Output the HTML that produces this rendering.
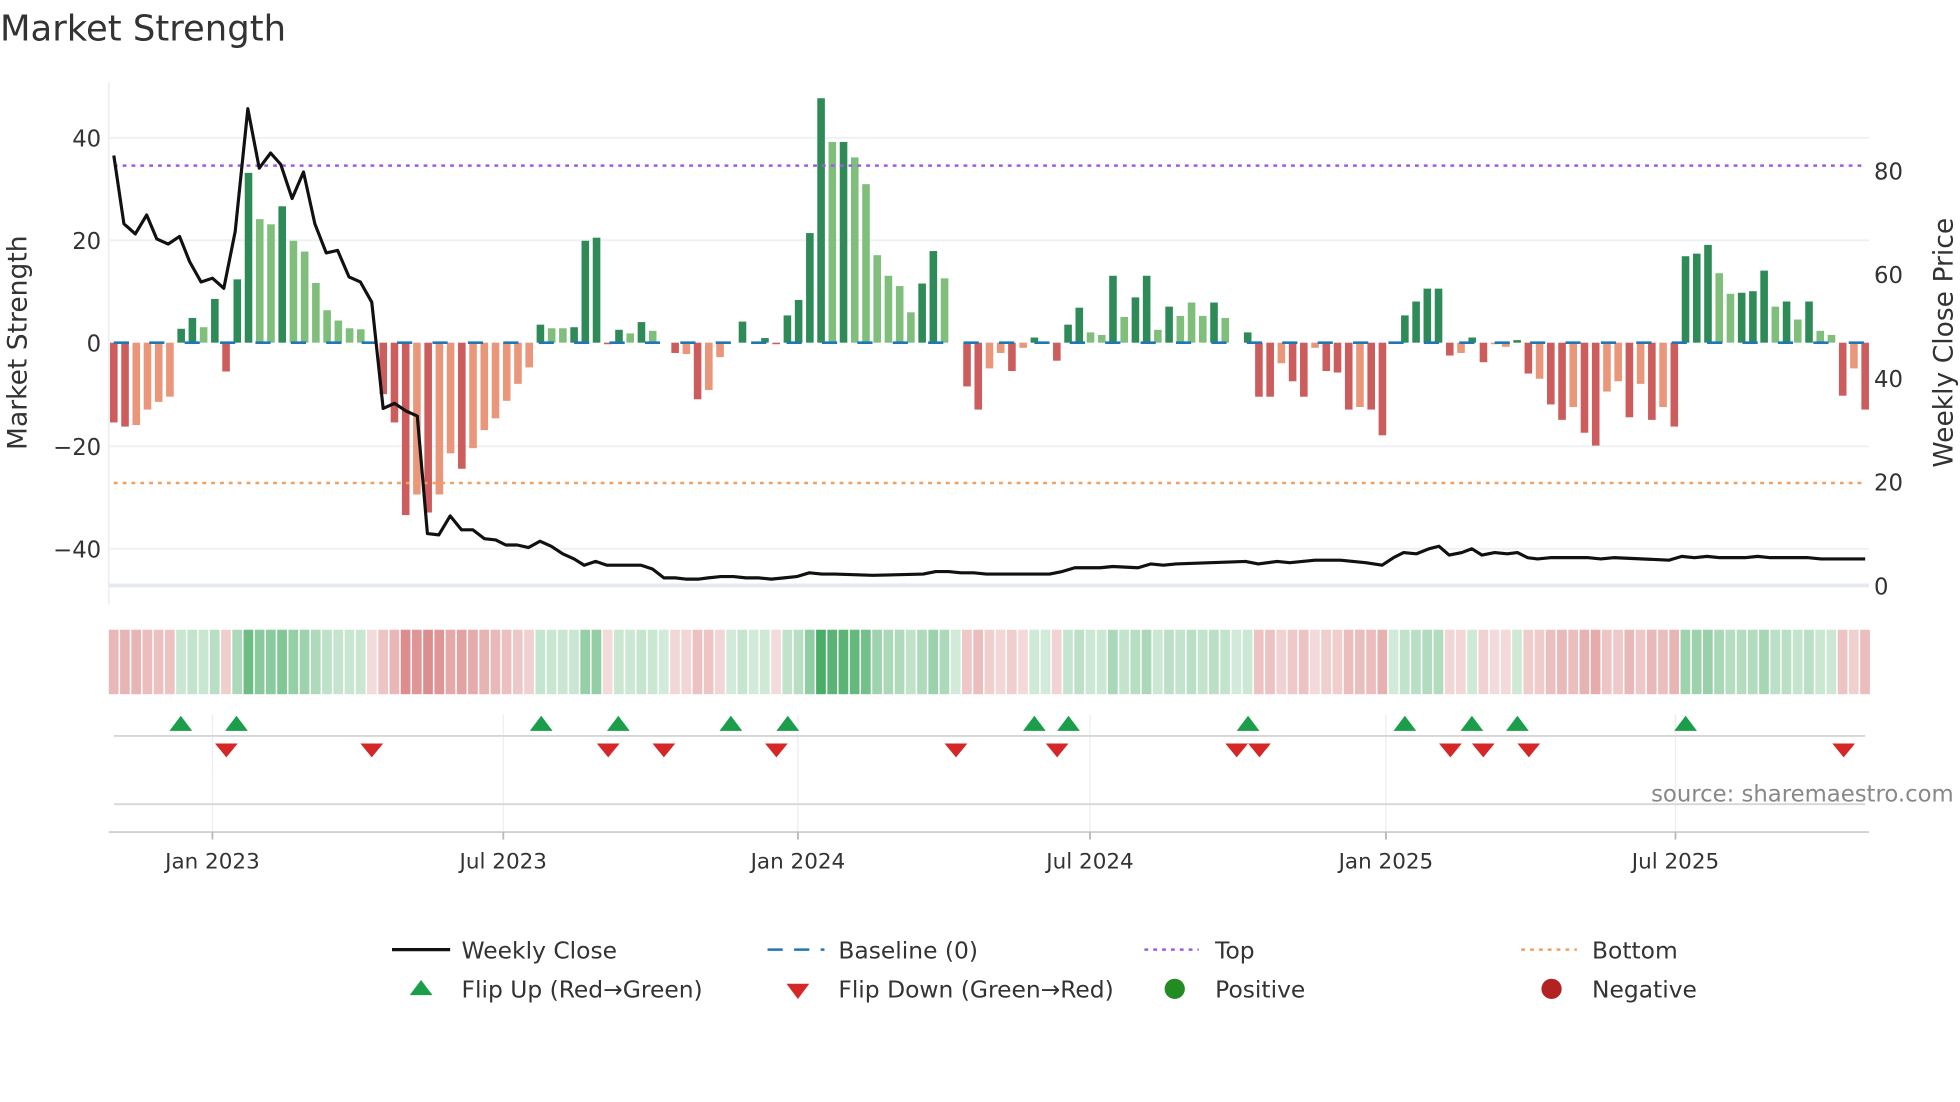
<!DOCTYPE html>
<html><head><meta charset="utf-8"><style>
html,body{margin:0;padding:0;background:#fff;}
svg{display:block;font-family:"DejaVu Sans","Liberation Sans",sans-serif;}
</style></head><body>
<svg id="s" width="1960" height="1102" viewBox="0 0 1550 871.5" preserveAspectRatio="none" xmlns="http://www.w3.org/2000/svg">
<text x="0" y="32" font-size="28" fill="#333">Market Strength</text>
<g stroke="#eef0f4" stroke-width="1.5">
<line x1="86" y1="109" x2="1478" y2="109"/><line x1="86" y1="190" x2="1478" y2="190"/>
<line x1="86" y1="353" x2="1478" y2="353"/><line x1="86" y1="434" x2="1478" y2="434"/>
<line x1="86" y1="65" x2="86" y2="478"/>
</g>
<line x1="86" y1="463" x2="1478" y2="463" stroke="#e6e9ef" stroke-width="3"/>
<g font-size="18" fill="#333" text-anchor="end">
<text x="80" y="116">40</text><text x="80" y="197">20</text><text x="80" y="278">0</text>
<text x="80" y="360">−20</text><text x="80" y="441">−40</text>
</g>
<g font-size="18" fill="#333">
<text x="1482" y="142">80</text><text x="1482" y="224">60</text><text x="1482" y="306">40</text>
<text x="1482" y="388">20</text><text x="1482" y="470">0</text>
</g>
<text transform="translate(21,271) rotate(-90)" font-size="21" fill="#333" text-anchor="middle">Market Strength</text>
<text transform="translate(1544,271) rotate(-90)" font-size="21" fill="#333" text-anchor="middle">Weekly Close Price</text>
<g id="bars"></g>
<line x1="90" y1="271" x2="1475" y2="271" stroke="#1f77b4" stroke-width="2" stroke-dasharray="12,16"/>
<line x1="90" y1="131" x2="1475" y2="131" stroke="#9b5de5" stroke-width="2" stroke-dasharray="3,4"/>
<line x1="90" y1="382" x2="1475" y2="382" stroke="#f0a060" stroke-width="2" stroke-dasharray="3,4"/>
<polyline fill="none" stroke="#111" stroke-width="2.5" stroke-linejoin="round" points="90,123 98,177 107,185 116,170 124,189 133,193 142,187 150,207 159,223 168,220 177,228 186,183 196,86 205,133 214,121 222,130 231,157 240,136 249,177 258,200 267,198 276,219 285,223 294,239 303,323 312,319 321,325 330,329 338,422 347,423 356,408 365,419 374,419 383,426 392,427 400,431 409,431 418,433 427,428 436,432 445,438 454,442 462,447 471,444 480,447 489,447 498,447 507,447 516,450 525,457 534,457 543,458 552,458 560,457 570,456 580,456 590,457 600,457 610,458 620,457 630,456 640,453 650,454 660,454 690,455 730,454 740,452 750,452 760,453 770,453 780,454 830,454 840,452 850,449 870,449 880,448 900,449 910,446 920,447 930,446 985,444 995,446 1010,444 1020,445 1040,443 1060,443 1080,445 1093,447 1102,441 1110,437 1120,438 1130,434 1138,432 1146,439 1156,437 1164,434 1172,439 1182,437 1192,438 1200,437 1208,441 1216,442 1226,441 1256,441 1266,442 1276,441 1320,443 1330,440 1340,441 1350,440 1360,441 1370,441 1380,441 1390,440 1400,441 1430,441 1440,442 1475,442"/>
<g id="heat"></g>
<g stroke="#eceef2" stroke-width="1">
<line x1="168" y1="565" x2="168" y2="658"/><line x1="398" y1="565" x2="398" y2="658"/>
<line x1="631" y1="565" x2="631" y2="658"/><line x1="862" y1="565" x2="862" y2="658"/>
<line x1="1096" y1="565" x2="1096" y2="658"/><line x1="1325" y1="565" x2="1325" y2="658"/>
</g>
<line x1="90" y1="582" x2="1475" y2="582" stroke="#d6d6d6" stroke-width="1.5"/>
<line x1="90" y1="636" x2="1475" y2="636" stroke="#d6d6d6" stroke-width="1.5"/>
<line x1="86" y1="658" x2="1478" y2="658" stroke="#d0d0d0" stroke-width="1.5"/>
<g stroke="#bbb" stroke-width="1.5">
<line x1="168" y1="658" x2="168" y2="664"/><line x1="398" y1="658" x2="398" y2="664"/>
<line x1="631" y1="658" x2="631" y2="664"/><line x1="862" y1="658" x2="862" y2="664"/>
<line x1="1096" y1="658" x2="1096" y2="664"/><line x1="1325" y1="658" x2="1325" y2="664"/>
</g>
<g id="flips"></g>
<text x="1545" y="634" font-size="18" fill="#888" text-anchor="end">source: sharemaestro.com</text>
<g font-size="17" fill="#333" text-anchor="middle">
<text x="168" y="687">Jan 2023</text><text x="398" y="687">Jul 2023</text><text x="631" y="687">Jan 2024</text>
<text x="862" y="687">Jul 2024</text><text x="1096" y="687">Jan 2025</text><text x="1325" y="687">Jul 2025</text>
</g>
<g font-size="18.5" fill="#333">
<line x1="310" y1="751" x2="356" y2="751" stroke="#111" stroke-width="2.5"/><text x="365" y="758">Weekly Close</text>
<line x1="607" y1="751" x2="652" y2="751" stroke="#1f77b4" stroke-width="2" stroke-dasharray="12,9"/><text x="663" y="758">Baseline (0)</text>
<line x1="905" y1="751" x2="948" y2="751" stroke="#9b5de5" stroke-width="2" stroke-dasharray="3,4"/><text x="961" y="758">Top</text>
<line x1="1203" y1="751" x2="1247" y2="751" stroke="#f0a060" stroke-width="2" stroke-dasharray="3,4"/><text x="1259" y="758">Bottom</text>
<polygon points="324,787 342,787 333,775" fill="#1a9e4a"/><text x="365" y="789">Flip Up (Red→Green)</text>
<polygon points="622,778 640,778 631,790" fill="#d62728"/><text x="663" y="789">Flip Down (Green→Red)</text>
<circle cx="929" cy="782" r="8" fill="#228b22"/><text x="961" y="789">Positive</text>
<circle cx="1227" cy="782" r="8" fill="#b22222"/><text x="1259" y="789">Negative</text>
</g>
</svg>
<script>
var d="-15.5d,-16.3d,-16l,-13l,-11.5l,-10.5l,2.7d,4.8d,3l,8.5d,-5.6d,12.3d,33d,24l,23l,26.5d,19.8l,17.7l,11.6l,6.3l,4.3l,2.8l,2.6l,-0.2d,-10d,-15.5d,-33.5d,-29.5l,-33d,-29.5l,-21.5l,-24.5d,-20.5l,-17l,-14.7l,-11.3l,-8l,-4.8l,3.5d,2.8l,2.8l,3d,19.8d,20.4d,-0.3d,2.5d,1.8l,4d,2.3l,0d,-2d,-2.2l,-11d,-9.2l,-2.8l,0d,4.1d,0d,0.9d,-0.3d,5.3d,8.3d,21.3d,47.5d,39l,39d,36l,30.8l,17l,13l,11l,5.9l,11.5d,17.8d,12.5l,0d,-8.5d,-13d,-5l,-2l,-5.5d,-1l,1d,0d,-3.5d,3.5d,6.8d,2l,1.5l,13d,5l,8.8d,13d,2.5l,7d,5.2l,7.8l,5.2l,7.8d,4.8l,0d,2d,-10.5d,-10.5d,-4l,-7.5d,-10.5d,-1l,-5.5d,-5.8d,-13d,-12.5l,-13d,-18d,0d,5.3d,8d,10.5d,10.5d,-2.5d,-2l,1d,-3.8d,-0.3l,-0.8l,0.5d,-6d,-7l,-12d,-15d,-12.5l,-17.5d,-20d,-9.5l,-7.5l,-14.5d,-8l,-15d,-12.5l,-16.3d,16.8d,17.3d,19d,13.5l,9.5l,9.7d,10d,14d,7l,8d,4.5l,8d,2.3l,1.5l,-10.3d,-5l,-13d".split(",");
var b="",h="";
var step=(1475-90)/(d.length-1);
d.forEach(function(s,i){var v=parseFloat(s),dk=s.slice(-1)=="d",x=90+i*step;
 var c=v>=0?(dk?"#2e8b57":"#7fbf7b"):(dk?"#cd5c5c":"#e9967a");
 var y0=271,y1=271-v*4.07;if(Math.abs(v)>0.05)b+='<rect x="'+(x-3)+'" y="'+Math.min(y0,y1)+'" width="6" height="'+Math.abs(y1-y0)+'" fill="'+c+'"/>';
 var a=0.22+Math.min(Math.abs(v),45)/45*0.65;
 var hc=v>=0?"rgba(46,160,80,"+a+")":"rgba(205,92,92,"+a+")";
 h+='<rect x="'+(x-step/2+0.5)+'" y="498" width="'+(step-1.2)+'" height="51" fill="'+hc+'"/>';
});
document.getElementById("bars").innerHTML=b;document.getElementById("heat").innerHTML=h;
var up=[143,187,428,489,578,623,818,845,987,1111,1164,1200,1333],dn=[179,294,481,525,614,756,836,978,996,1147,1173,1209,1458],f="";
up.forEach(function(x){f+='<polygon points="'+(x-9)+',578 '+(x+9)+',578 '+x+',566" fill="#1a9e4a"/>';});
dn.forEach(function(x){f+='<polygon points="'+(x-9)+',588 '+(x+9)+',588 '+x+',599" fill="#d62728"/>';});
document.getElementById("flips").innerHTML=f;
</script>
</body></html>
